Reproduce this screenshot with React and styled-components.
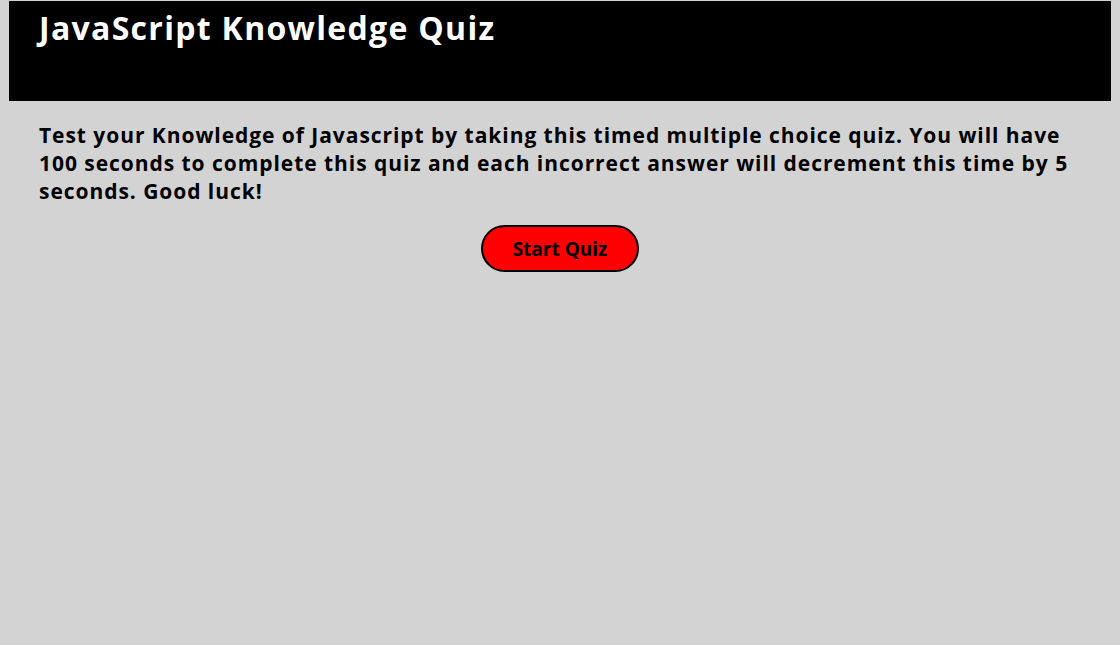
import styled, { createGlobalStyle } from "styled-components";

const GlobalStyle = createGlobalStyle`
  body {
    margin: 0;
    background: #d3d3d3;
    font-family: "Open Sans", "DejaVu Sans", sans-serif;
  }
`;

const Page = styled.div`
  min-height: 645px;
  padding: 1px 9px 0;
  box-sizing: border-box;
`;

const Header = styled.header`
  height: 100px;
  background: #000;
  padding: 0 30px;
`;

const Title = styled.h1`
  margin: 0;
  padding-top: 7px;
  font-size: 32px;
  font-weight: 700;
  letter-spacing: 1.3px;
  color: #fff;
  line-height: 40px;
`;

const Main = styled.main`
  padding: 20px 30px;
`;

const Intro = styled.p`
  margin: 0;
  font-size: 21px;
  font-weight: 700;
  letter-spacing: 0.95px;
  line-height: 28px;
  color: #000;
`;

const ButtonRow = styled.div`
  display: flex;
  justify-content: center;
  margin-top: 20px;
`;

const StartButton = styled.button`
  width: 158px;
  height: 47px;
  background: #ff0000;
  border: 2px solid #000;
  border-radius: 24px;
  font-family: inherit;
  font-size: 19px;
  font-weight: 700;
  color: #000;
  cursor: pointer;
`;

export default function App() {
  return (
    <>
      <GlobalStyle />
      <Page>
        <Header>
          <Title>JavaScript Knowledge Quiz</Title>
        </Header>
        <Main>
          <Intro>
            Test your Knowledge of Javascript by taking this timed multiple
            choice quiz. You will have 100 seconds to complete this quiz and
            each incorrect answer will decrement this time by 5 seconds. Good
            luck!
          </Intro>
          <ButtonRow>
            <StartButton>Start Quiz</StartButton>
          </ButtonRow>
        </Main>
      </Page>
    </>
  );
}
